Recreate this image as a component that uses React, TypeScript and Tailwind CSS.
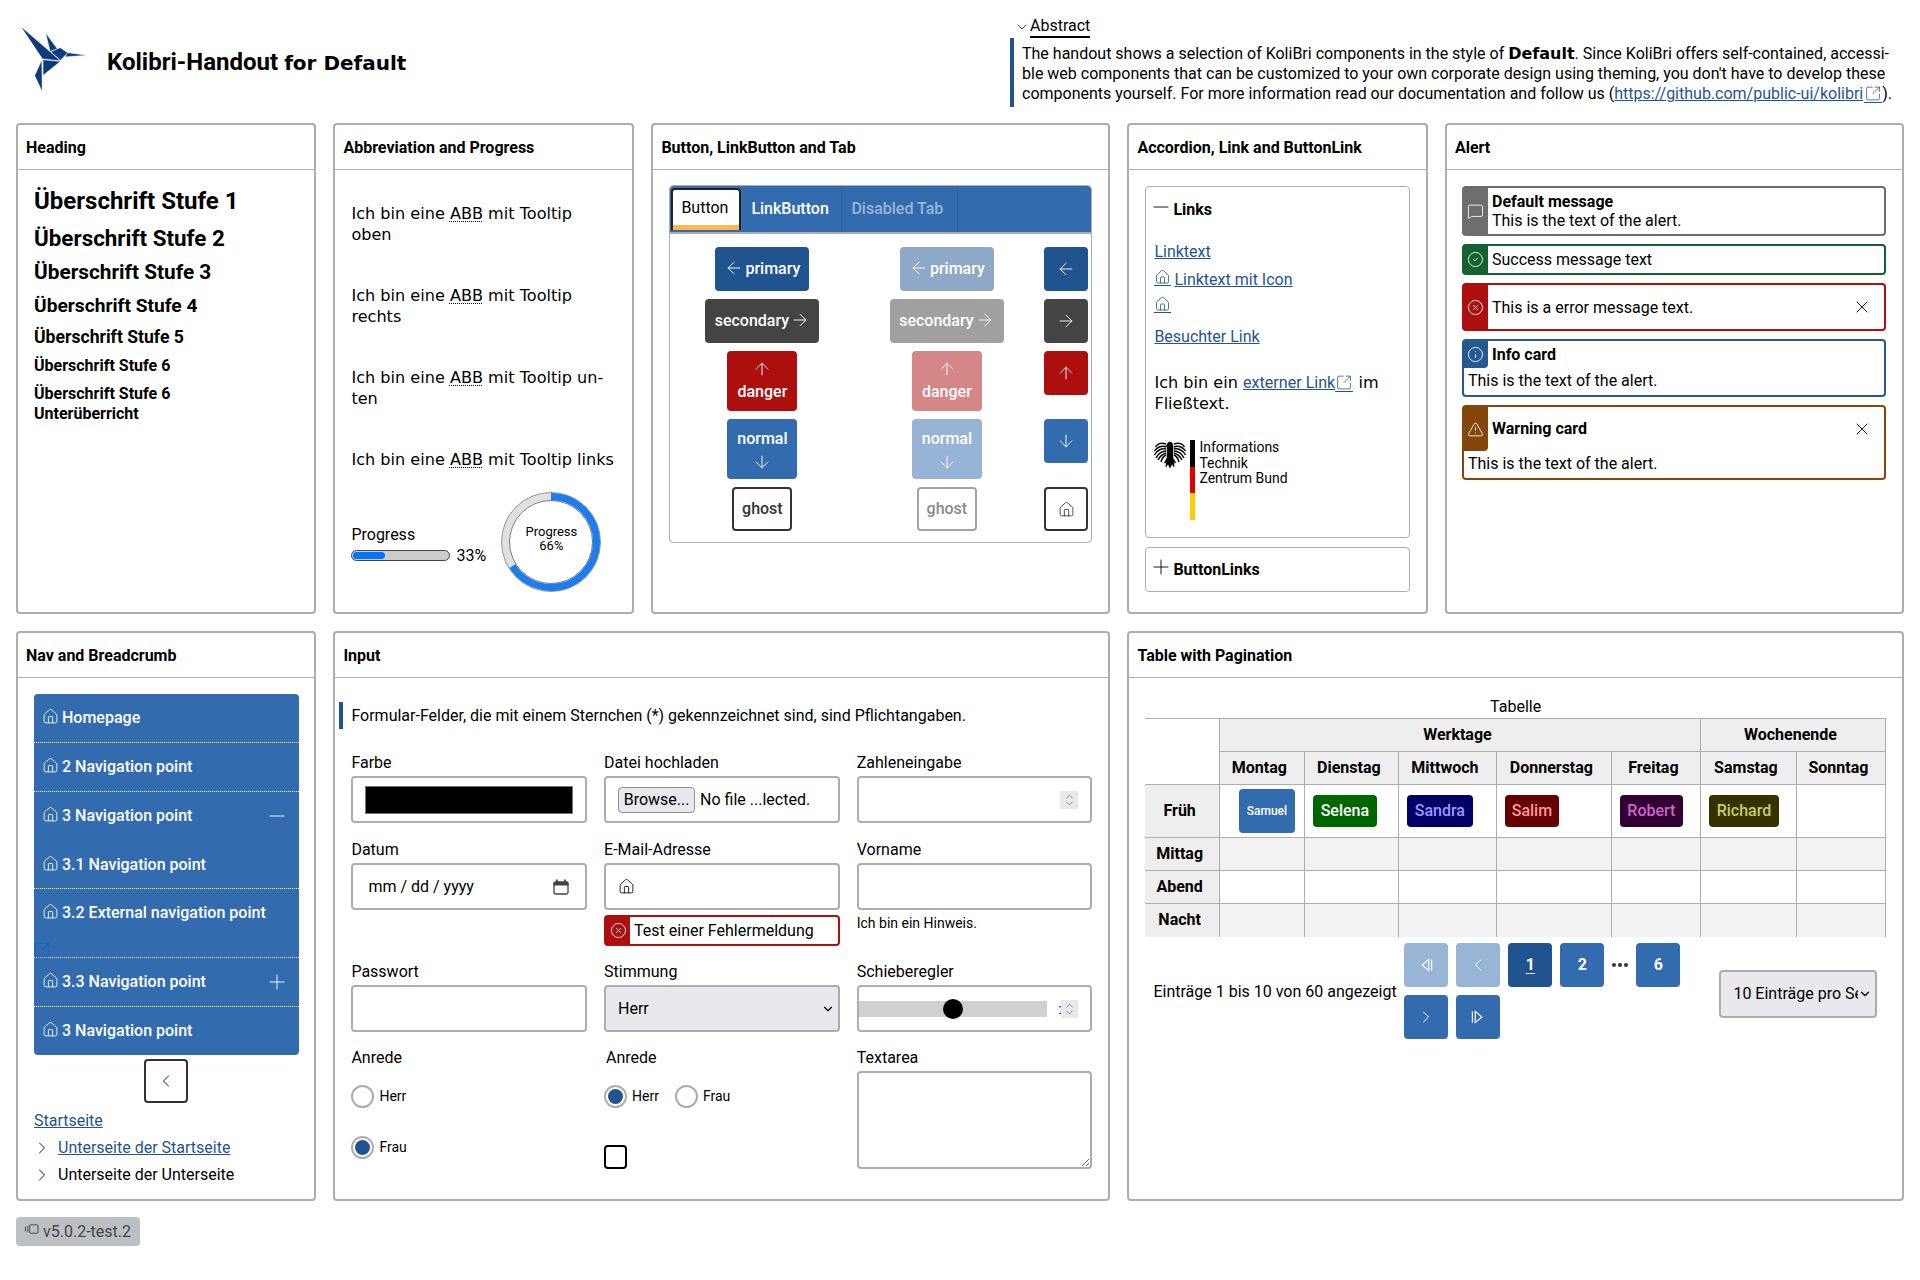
import React from 'react'
import {
  ArrowDown,
  ArrowLeft,
  ArrowRight,
  ArrowUp,
  ChevronDown,
  ChevronLeft,
  ChevronRight,
  ChevronUp,
  CircleCheck,
  CircleX,
  House,
  Info,
  MessageSquare,
  Minus,
  Plus,
  SquareArrowOutUpRight,
  TriangleAlert,
  X,
} from 'lucide-react'

const Card: React.FC<{ title: string; className?: string; children: React.ReactNode }> = ({
  title,
  className = '',
  children,
}) => (
  <section className={`border-2 border-[#adadad] rounded-[4px] bg-white min-w-0 ${className}`}>
    <h2 className="h-[45px] border-b border-[#adadad] px-[8px] pt-px flex items-center font-bold text-[16px] text-black">
      {title}
    </h2>
    {children}
  </section>
)

const ExtIcon: React.FC<{ className?: string; strokeWidth?: number }> = ({ className = '', strokeWidth = 1.1 }) => (
  <SquareArrowOutUpRight strokeWidth={strokeWidth} className={`inline-block ${className}`} />
)

const A: React.FC<{ children: React.ReactNode; className?: string }> = ({ children, className = '' }) => (
  <a className={`text-[#1f5491] underline ${className}`}>{children}</a>
)

const Abbr = () => (
  <span className="underline decoration-dotted decoration-1 underline-offset-2">ABB</span>
)

const Logo = () => (
  <svg viewBox="30 50 200 200" className="w-[67px] h-[67px] shrink-0 ml-[4px] mt-[26px]">
    <g fill="#0b3d7c" stroke="#fff" strokeWidth="1">
      <polygon points="33,52 120,127 150,154 97,148" />
      <polygon points="107,72 141,118 120,125" />
      <polygon points="122,127 150,115 172,130 151,152" />
      <polygon points="172,130 228,137 165,142" />
      <polygon points="99,151 150,156 99,197" />
      <polygon points="95,152 74,198 96,245" />
    </g>
  </svg>
)

const Eagle = () => (
  <svg viewBox="0 0 32 30" className="w-[32px] h-[30px] shrink-0" fill="none" stroke="#000">
    <path d="M16 2c-2 0-3 1.500-3 3l-1.500 1 1.500.5V18l-3 5 2-1v5l2-3 2 4 2-4 2 3v-5l2 1-3-5V6.500C19 4 18 2 16 2Z" fill="#000" strokeWidth="0.5" />
    <path d="M12 4C7 2 3 4 1.500 7M12 7C8 5 3 7 .5 11M12 9C8 8 3 10 .5 15M12 11C9 11 4 13 2 18M12 13C9 14 6 16 4 20M12 15C10 16 8 18 7 22" strokeWidth="1.400" />
    <path d="M20 4C25 2 29 4 30.500 7M20 7C24 5 29 7 31.500 11M20 9C24 8 29 10 31.500 15M20 11C23 11 28 13 30 18M20 13C23 14 26 16 28 20M20 15C22 16 24 18 25 22" strokeWidth="1.400" />
  </svg>
)

const Btn: React.FC<{ className: string; children: React.ReactNode }> = ({ className, children }) => (
  <div className={`rounded-[4px] flex items-center justify-center text-[16px] font-medium text-white ${className}`}>
    {children}
  </div>
)

const ButtonRows = ({ faded }: { faded: boolean }) => {
  const op = faded ? 'opacity-50' : ''
  return (
    <div className="flex flex-col items-center gap-2">
      <Btn className={`w-[94px] h-[44px] gap-[1px] bg-[#1f5491] ${op}`}>
        <ArrowLeft size={20} strokeWidth={1.1} className="-mt-[3px]" />
        primary
      </Btn>
      <Btn className={`w-[114px] h-[44px] gap-[1px] bg-[#444444] ${op}`}>
        secondary
        <ArrowRight size={20} strokeWidth={1.1} className="-mt-[3px]" />
      </Btn>
      <Btn className={`w-[70px] h-[60px] flex-col gap-[1px] bg-[#ad0f0f] ${op}`}>
        <ArrowUp size={20} strokeWidth={1.1} />
        danger
      </Btn>
      <Btn className={`w-[70px] h-[60px] flex-col gap-[1px] bg-[#326cae] ${op}`}>
        normal
        <ArrowDown size={20} strokeWidth={1.1} />
      </Btn>
      <Btn className={`w-[60px] h-[44px] border-2 ${faded ? 'border-[#a3a3a3]' : 'border-[#333333]'}`}>
        <span className={faded ? 'text-[#8a8a8a]' : 'text-[#333333]'}>ghost</span>
      </Btn>
    </div>
  )
}

const IconButtons = () => (
  <div className="flex flex-col items-center">
    <Btn className="w-[44px] h-[44px] bg-[#1f5491]">
      <ArrowLeft size={20} strokeWidth={1.1} />
    </Btn>
    <Btn className="w-[44px] h-[44px] mt-2 bg-[#444444]">
      <ArrowRight size={20} strokeWidth={1.1} />
    </Btn>
    <Btn className="w-[44px] h-[44px] mt-2 bg-[#ad0f0f]">
      <ArrowUp size={20} strokeWidth={1.1} />
    </Btn>
    <Btn className="w-[44px] h-[44px] mt-[24px] bg-[#326cae]">
      <ArrowDown size={20} strokeWidth={1.1} />
    </Btn>
    <Btn className="w-[44px] h-[44px] mt-[24px] border-2 border-[#333333]">
      <House size={17} strokeWidth={1.2} className="text-[#333333]" />
    </Btn>
  </div>
)

const alertColors = {
  gray: 'border-[#6e6e6e]',
  green: 'border-[#14622f]',
  red: 'border-[#ad0f0f]',
  blue: 'border-[#25598f]',
  brown: 'border-[#84460a]',
}
const alertBg = {
  gray: 'bg-[#6e6e6e]',
  green: 'bg-[#14622f]',
  red: 'bg-[#ad0f0f]',
  blue: 'bg-[#25598f]',
  brown: 'bg-[#84460a]',
}

const CloseX = () => (
  <div className="w-[48px] flex items-center pl-[16px]">
    <X size={20} strokeWidth={1.1} />
  </div>
)

const Alert: React.FC<{
  color: keyof typeof alertColors
  icon: React.ReactNode
  height: string
  close?: boolean
  children: React.ReactNode
}> = ({ color, icon, height, close, children }) => (
  <div className={`border-2 rounded-[4px] flex items-stretch ${alertColors[color]} ${height}`}>
    <div className={`w-[24px] shrink-0 flex items-center justify-center text-white ${alertBg[color]}`}>{icon}</div>
    <div className="flex-1 pl-[4px] flex flex-col justify-center leading-[19px] text-[16px] text-black">{children}</div>
    {close && <CloseX />}
  </div>
)

const AlertCard: React.FC<{
  color: keyof typeof alertColors
  icon: React.ReactNode
  height: string
  iconHeight: string
  title: string
  close?: boolean
  bodyClass: string
}> = ({ color, icon, height, iconHeight, title, close, bodyClass }) => (
  <div className={`border-2 rounded-[4px] ${alertColors[color]} ${height}`}>
    <div className={`flex items-center ${iconHeight}`}>
      <div
        className={`w-[24px] h-full shrink-0 rounded-br-[4px] flex items-center justify-center text-white ${alertBg[color]}`}
      >
        {icon}
      </div>
      <div className="flex-1 pl-[4px] font-bold text-[16px]">{title}</div>
      {close && <CloseX />}
    </div>
    <div className={`pl-[4px] text-[16px] leading-[19px] ${bodyClass}`}>This is the text of the alert.</div>
  </div>
)

const NavRow: React.FC<{
  label: string
  line?: boolean
  height?: string
  suffix?: React.ReactNode
  children?: React.ReactNode
}> = ({ label, line = true, height = 'h-[49px]', suffix, children }) => (
  <div className={`${height} ${line ? 'border-b border-dotted border-white' : ''} last:border-b-0`}>
    <div className="h-[48px] pl-[8px] pr-[10px] flex items-center text-white font-medium text-[16px]">
      <House size={17} strokeWidth={1.2} className="mr-[3px] -mt-[3px]" />
      <span className="flex-1">{label}</span>
      {suffix}
    </div>
    {children}
  </div>
)

const inputBox = 'h-[47px] border-2 border-[#adadad] rounded-[4px] bg-white'

const Label: React.FC<{ children: React.ReactNode; className?: string }> = ({ children, className = '' }) => (
  <div className={`h-[23px] leading-[20px] text-[16px] ${className}`}>{children}</div>
)

const Spin: React.FC<{ className?: string }> = ({ className = '' }) => (
  <div className={`w-[18px] h-[18px] bg-[#e9e9ed] flex flex-col items-center justify-center text-[#666] ${className}`}>
    <ChevronUp size={11} strokeWidth={1.5} className="-mb-[2px]" />
    <ChevronDown size={11} strokeWidth={1.5} className="-mt-[2px]" />
  </div>
)

const Radio: React.FC<{ checked?: boolean; label: string; className?: string }> = ({
  checked,
  label,
  className = '',
}) => (
  <div className={`flex items-center gap-[5px] text-[14px] ${className}`}>
    <div className="w-[23px] h-[23px] rounded-full border-2 border-[#adadad] flex items-center justify-center">
      {checked && <div className="w-[15px] h-[15px] rounded-full bg-[#1f5491]" />}
    </div>
    {label}
  </div>
)

const badges = [
  { n: 'Selena', c: 'w-[64px] bg-[#006600] text-white' },
  { n: 'Sandra', c: 'w-[66px] bg-[#000066] text-[#9999ff]' },
  { n: 'Salim', c: 'w-[54px] bg-[#660000] text-[#ff9999]' },
  { n: 'Robert', c: 'w-[63px] bg-[#330033] text-[#cc66cc]' },
  { n: 'Richard', c: 'w-[70px] bg-[#333300] text-[#cccc66]' },
]

const th = 'border border-[#adadad] bg-[#eeeeee] font-bold text-[16px] p-0 pr-[5px]'
const td = 'border border-[#adadad] p-0'

const PageBtn: React.FC<{ className?: string; children: React.ReactNode }> = ({ className = 'bg-[#326cae]', children }) => (
  <div className={`w-[44px] h-[44px] rounded-[4px] flex items-center justify-center text-white font-bold text-[16px] ${className}`}>
    {children}
  </div>
)

const App: React.FC = () => {
  return (
    <div className="w-[1920px] h-[1280px] bg-white pl-4 text-black font-['Roboto',sans-serif] text-[16px]">
      <header className="h-[123px] flex items-start">
        <Logo />
        <h1 className="ml-[20px] mt-[46px] text-[24px] leading-[32px] font-bold">
          Kolibri-Handout <span className="font-['DejaVu_Sans',sans-serif] text-[20px]">for Default</span>
        </h1>
        <div className="ml-auto mr-[34px] w-[876px] pt-[15px]">
          <div className="flex items-center h-[23px] pl-[4px]">
            <ChevronDown size={16} strokeWidth={1.1} />
            <span className="border-b-2 border-black leading-[21px] h-[23px]">Abstract</span>
          </div>
          <div className="border-l-4 border-[#1f5491] pl-[8px] pt-[6px] h-[69px] leading-[20px] whitespace-nowrap">
            The handout shows a selection of KoliBri components in the style of{' '}
            <strong className="font-['DejaVu_Sans',sans-serif] font-bold">Default</strong>. Since KoliBri offers
            self-contained, accessi-
            <br />
            ble web components that can be customized to your own corporate design using theming, you don't have to
            develop these
            <br />
            components yourself. For more information read our documentation and follow us (
            <A>
              https://github.com/public-ui/kolibri
              <ExtIcon className="w-[18px] h-[18px] align-[-4px] ml-px border-b border-[#1f5491]" />
            </A>
            ).
          </div>
        </div>
      </header>

      <main className="grid grid-cols-[300.4px_301px_459px_300.6px_459px] grid-rows-[491px_570px] gap-[17px]">
        <Card title="Heading">
          <div className="pl-[16px] pt-[14px] font-bold">
            <div className="text-[24px] leading-[35px]">Überschrift Stufe 1</div>
            <div className="text-[22.4px] leading-[36px] mt-px">Überschrift Stufe 2</div>
            <div className="text-[20.8px] leading-[32px]">Überschrift Stufe 3</div>
            <div className="text-[19.2px] leading-[32px] mt-[2px]">Überschrift Stufe 4</div>
            <div className="text-[17.6px] leading-[30px]">Überschrift Stufe 5</div>
            <div className="text-[16px] leading-[28px]">Überschrift Stufe 6</div>
            <div className="text-[16px] leading-[20px] mt-[4px]">Überschrift Stufe 6</div>
            <div className="text-[16px] leading-[19px]">Unterüberricht</div>
          </div>
        </Card>

        <Card title="Abbreviation and Progress">
          <div className="pl-[16px] pt-[33px]">
            <div className="font-['DejaVu_Sans',sans-serif] text-[16.1px] leading-[21px] flex flex-col gap-[40px]">
              <p>
                Ich bin eine <Abbr /> mit Tooltip
                <br />
                oben
              </p>
              <p>
                Ich bin eine <Abbr /> mit Tooltip
                <br />
                rechts
              </p>
              <p>
                Ich bin eine <Abbr /> mit Tooltip un-
                <br />
                ten
              </p>
              <p>
                Ich bin eine <Abbr /> mit Tooltip links
              </p>
            </div>
            <div className="mt-[22px] flex items-center">
              <div className="w-[150px] pt-[8px]">
                <div className="leading-[20px]">Progress</div>
                <div className="flex items-center -mt-px">
                  <div className="w-[99px] h-[11px] border border-[#444] rounded-full bg-[#cccccc] p-px">
                    <div className="w-[33%] h-full rounded-full bg-[#0075ff]" />
                  </div>
                  <span className="ml-[6px] text-[16px]">33%</span>
                </div>
              </div>
              <div className="relative w-[100px] h-[100px]">
                <svg viewBox="0 0 100 100" className="w-[100px] h-[100px]">
                  <circle cx="50" cy="50" r="45.500" fill="none" stroke="#e0e0e0" strokeWidth="7" />
                  <circle
                    cx="50"
                    cy="50"
                    r="45.500"
                    fill="none"
                    stroke="#1a7ef0"
                    strokeWidth="7"
                    strokeDasharray="188.700 285.900"
                    transform="rotate(-90 50 50)"
                  />
                  <circle cx="50" cy="50" r="49.500" fill="none" stroke="#777" strokeWidth="0.800" />
                  <circle cx="50" cy="50" r="41.500" fill="none" stroke="#555" strokeWidth="0.800" />
                </svg>
                <div className="absolute inset-0 flex flex-col items-center justify-center text-[13px] leading-[14px] pb-[6px]">
                  <span>Progress</span>
                  <span>66%</span>
                </div>
              </div>
            </div>
          </div>
        </Card>

        <Card title="Button, LinkButton and Tab">
          <div className="px-[16px] pt-[15px]">
            <div className="border border-[#adadad] rounded-[4px]">
              <div className="h-[48px] bg-[#326cae] rounded-t-[4px] border-b-2 border-[#adadad] flex items-stretch text-[16px] font-medium">
                <div className="ml-px my-[2px] w-[70px] bg-white border-2 border-b-0 border-[#222] rounded-t-[4px] flex flex-col">
                  <div className="flex-1 flex items-center pl-[8px] font-normal text-black">Button</div>
                  <div className="h-[5px] bg-[#ffb84d]" />
                </div>
                <div className="w-[101px] border-r border-[#2f6199] flex items-center pl-[10px] text-white">LinkButton</div>
                <div className="w-[116px] border-r border-[#2f6199] flex items-center pl-[9px] text-white/50">Disabled Tab</div>
              </div>
              <div className="grid grid-cols-[184px_185px_54px] pt-[13px] pb-[11px]">
                <ButtonRows faded={false} />
                <ButtonRows faded />
                <IconButtons />
              </div>
            </div>
          </div>
        </Card>

        <Card title="Accordion, Link and ButtonLink">
          <div className="px-[16px] pt-[16px]">
            <div className="h-[352px] border border-[#adadad] rounded-[4px] px-[8px]">
              <div className="h-[45px] flex items-center font-bold">
                <Minus size={24} strokeWidth={0.9} className="-ml-[5px] -mt-[6px]" />
                Links
              </div>
              <div className="mt-[8px] leading-[24px]">
                <div>
                  <A>Linktext</A>
                </div>
                <div className="mt-[4px]">
                  <A>
                    <House size={17} strokeWidth={1.2} className="inline-block mr-[3px] align-[-1px] border-b border-[#1f5491]" />
                    Linktext mit Icon
                  </A>
                </div>
                <div className="mt-[3px]">
                  <A>
                    <House size={17} strokeWidth={1.2} className="inline-block align-[-1px] border-b border-[#1f5491]" />
                  </A>
                </div>
                <div className="mt-[6px]">
                  <A>Besuchter Link</A>
                </div>
              </div>
              <p className="mt-[23px] font-['DejaVu_Sans',sans-serif] text-[16.1px] leading-[21px]">
                Ich bin ein{' '}
                <A className="font-['Roboto',sans-serif]">
                  externer Link
                  <ExtIcon className="w-[18px] h-[18px] align-[-4px] border-b border-[#1f5491]" />
                </A>{' '}
                im
                <br />
                Fließtext.
              </p>
              <div className="mt-[26px] flex items-start">
                <Eagle />
                <div className="ml-[4px] w-[5px] h-[80px] flex flex-col">
                  <div className="h-[27px] bg-black" />
                  <div className="h-[26px] bg-[#dd0000]" />
                  <div className="h-[27px] bg-[#ffcc00]" />
                </div>
                <div className="ml-[4px] text-[14px] leading-[15.500px]">
                  Informations
                  <br />
                  Technik
                  <br />
                  Zentrum Bund
                </div>
              </div>
            </div>
            <div className="mt-[9px] h-[45px] border border-[#adadad] rounded-[4px] px-[8px] flex items-center font-bold">
              <Plus size={24} strokeWidth={0.9} className="-ml-[5px] -mt-[6px]" />
              ButtonLinks
            </div>
          </div>
        </Card>

        <Card title="Alert">
          <div className="pl-[15px] pr-[16px] pt-[16px] flex flex-col gap-[8px]">
            <Alert color="gray" height="h-[50px]" icon={<MessageSquare size={17} strokeWidth={1.2} />}>
              <strong>Default message</strong>
              <span>This is the text of the alert.</span>
            </Alert>
            <Alert color="green" height="h-[31px]" icon={<CircleCheck size={17} strokeWidth={1.2} />}>
              Success message text
            </Alert>
            <Alert color="red" height="h-[48px]" close icon={<CircleX size={17} strokeWidth={1.2} />}>
              This is a error message text.
            </Alert>
            <AlertCard
              color="blue"
              height="h-[58px]"
              iconHeight="h-[27px]"
              icon={<Info size={17} strokeWidth={1.2} />}
              title="Info card"
              bodyClass="mt-[3px]"
            />
            <AlertCard
              color="brown"
              height="h-[75px]"
              iconHeight="h-[44px]"
              close
              icon={<TriangleAlert size={17} strokeWidth={1.2} />}
              title="Warning card"
              bodyClass="mt-[3px]"
            />
          </div>
        </Card>

        <Card title="Nav and Breadcrumb">
          <div className="px-[16px] pt-[16px]">
            <nav className="w-[265px] bg-[#326cae] rounded-[4px] overflow-hidden">
              <NavRow label="Homepage" />
              <NavRow label="2 Navigation point" />
              <NavRow label="3 Navigation point" line={false} suffix={<Minus size={24} strokeWidth={0.9} />} />
              <NavRow label="3.1 Navigation point" height="h-[48px]" />
              <NavRow label="3.2 External navigation point" height="h-[69px]">
                <ExtIcon strokeWidth={1.6} className="block w-[18px] h-[18px] ml-[-1px] text-[#1a5ecf]" />
              </NavRow>
              <NavRow label="3.3 Navigation point" suffix={<Plus size={24} strokeWidth={0.9} />} />
              <NavRow label="3 Navigation point" line={false} height="h-[48px]" />
            </nav>
            <div className="mt-[4px] mx-auto w-[44px] h-[44px] border-2 border-[#333] rounded-[4px] flex items-center justify-center">
              <ChevronLeft size={20} strokeWidth={1.1} />
            </div>
            <div className="mt-[4px]">
              <div className="h-[27px] flex items-center">
                <A>Startseite</A>
              </div>
              <div className="h-[27px] flex items-center">
                <ChevronRight size={20} strokeWidth={1.1} className="-ml-[2px] mr-[6px]" />
                <A>Unterseite der Startseite</A>
              </div>
              <div className="h-[27px] flex items-center">
                <ChevronRight size={20} strokeWidth={1.1} className="-ml-[2px] mr-[6px]" />
                Unterseite der Unterseite
              </div>
            </div>
          </div>
        </Card>

        <Card title="Input" className="col-span-2">
          <div className="pt-[24px]">
            <div className="ml-[4px] h-[27px] border-l-4 border-[#1f5491] pl-[8px] flex items-center">
              Formular-Felder, die mit einem Sternchen (*) gekennzeichnet sind, sind Pflichtangaben.
            </div>
            <div className="mt-[24px] px-[16px] grid grid-cols-3 gap-x-[17px] gap-y-[16px]">
              <div className="mb-px">
                <Label>Farbe</Label>
                <div className={`${inputBox} flex items-center px-[12px]`}>
                  <div className="w-full h-[28px] bg-black border border-[#777]" />
                </div>
              </div>
              <div>
                <Label>Datei hochladen</Label>
                <div className={`${inputBox} flex items-center pl-[12px] whitespace-nowrap`}>
                  <div className="w-[77px] h-[26px] bg-[#e9e9ed] border border-[#8f8f9d] rounded-[4px] flex items-center justify-center">
                    Browse...
                  </div>
                  <span className="ml-[5px]">No file ...lected.</span>
                </div>
              </div>
              <div>
                <Label>Zahleneingabe</Label>
                <div className={`${inputBox} flex items-center justify-end pr-[12px]`}>
                  <Spin />
                </div>
              </div>

              <div>
                <Label>Datum</Label>
                <div className={`${inputBox} flex items-center justify-between pl-[15px] pr-[16px]`}>
                  <span>mm / dd / yyyy</span>
                  <svg viewBox="0 0 16 16" className="w-[16px] h-[16px] text-[#444]" fill="none" stroke="currentColor">
                    <rect x="1" y="3" width="14" height="12" rx="1.500" strokeWidth="1.300" />
                    <path d="M1 3.500h14V6H1Z" fill="currentColor" />
                    <path d="M4 0.500v3M12 0.500v3" strokeWidth="1.800" />
                  </svg>
                </div>
              </div>
              <div>
                <Label>E-Mail-Adresse</Label>
                <div className={`${inputBox} flex items-center pl-[12px]`}>
                  <House size={17} strokeWidth={1.2} />
                </div>
                <div className="mt-[5px] h-[31px] border-2 border-[#ad0f0f] rounded-[4px] flex items-center">
                  <div className="w-[24px] h-full bg-[#ad0f0f] flex items-center justify-center text-white">
                    <CircleX size={17} strokeWidth={1.2} />
                  </div>
                  <span className="ml-[4px]">Test einer Fehlermeldung</span>
                </div>
              </div>
              <div>
                <Label>Vorname</Label>
                <input type="text" aria-label="Vorname" className={`${inputBox} w-full`} />
                <div className="mt-[4px] text-[14px] leading-[18px]">Ich bin ein Hinweis.</div>
              </div>

              <div>
                <Label>Passwort</Label>
                <input type="password" aria-label="Passwort" className={`${inputBox} w-full`} />
              </div>
              <div>
                <Label>Stimmung</Label>
                <div className={`${inputBox} !bg-[#e9e9ed] flex items-center justify-between pl-[12px] pr-[3px]`}>
                  <span>Herr</span>
                  <ChevronDown size={14} strokeWidth={2} />
                </div>
              </div>
              <div>
                <Label>Schieberegler</Label>
                <div className={`${inputBox} flex items-center pr-[12px]`}>
                  <div className="w-[189px] h-[16px] bg-[#d0d0d0] flex items-center">
                    <div className="ml-[84px] w-[20px] h-[20px] rounded-full bg-black" />
                  </div>
                  <span className="ml-[12px] w-[2px] overflow-hidden leading-none text-[14px]">:</span>
                  <Spin />
                </div>
              </div>

              <div>
                <Label>Anrede</Label>
                <Radio label="Herr" className="mt-[14px]" />
                <Radio label="Frau" checked className="mt-[28px]" />
              </div>
              <div>
                <Label className="pl-[2px]">Anrede</Label>
                <div className="flex mt-[14px] gap-[16px]">
                  <Radio label="Herr" checked />
                  <Radio label="Frau" />
                </div>
                <div className="mt-[37px] w-[23px] h-[24px] border-2 border-black rounded-[4px]" />
              </div>
              <div>
                <Label>Textarea</Label>
                <textarea aria-label="Textarea" className="block w-full h-[98px] border-2 border-[#adadad] rounded-[4px]" />
              </div>
            </div>
          </div>
        </Card>

        <Card title="Table with Pagination" className="col-span-2">
          <div className="px-[16px] pt-[19px]">
            <table className="w-[740px] table-fixed border-collapse">
              <caption className="h-[21px] leading-[19px] text-center">Tabelle</caption>
              <colgroup>
                <col className="w-[74px]" />
                <col className="w-[85px]" />
                <col className="w-[94px]" />
                <col className="w-[98px]" />
                <col className="w-[115px]" />
                <col className="w-[89px]" />
                <col className="w-[96px]" />
                <col className="w-[89px]" />
              </colgroup>
              <thead>
                <tr className="h-[33px]">
                  <td rowSpan={2} className="border-t border-[#adadad] border-r p-0" />
                  <th colSpan={5} className={th}>
                    Werktage
                  </th>
                  <th colSpan={2} className={th}>
                    Wochenende
                  </th>
                </tr>
                <tr className="h-[33px]">
                  {['Montag', 'Dienstag', 'Mittwoch', 'Donnerstag', 'Freitag', 'Samstag', 'Sonntag'].map(d => (
                    <th key={d} className={th}>
                      {d}
                    </th>
                  ))}
                </tr>
              </thead>
              <tbody>
                <tr className="h-[53px]">
                  <th className="border-y border-r border-[#adadad] bg-[#eeeeee] font-bold p-0 pr-[5px]">Früh</th>
                  <td className={td}>
                    <div className="ml-[19px] w-[56px] h-[44px] rounded-[4px] bg-[#326cae] text-white text-[12px] font-medium flex items-center justify-center">
                      Samuel
                    </div>
                  </td>
                  {badges.map(b => (
                    <td key={b.n} className={td}>
                      <div
                        className={`ml-[8px] h-[32px] rounded-[4px] font-medium flex items-center justify-center ${b.c}`}
                      >
                        {b.n}
                      </div>
                    </td>
                  ))}
                  <td className={td} />
                </tr>
                {['Mittag', 'Abend', 'Nacht'].map((r, i) => (
                  <tr key={r} className={`h-[33px] ${i !== 1 ? 'bg-[#f2f2f2]' : ''}`}>
                    <th className={`${i === 2 ? '' : 'border-b'} border-r border-[#adadad] bg-[#eeeeee] font-bold p-0 pr-[5px]`}>{r}</th>
                    {[0, 1, 2, 3, 4, 5, 6].map(c => (
                      <td key={c} className={`border-x ${i === 2 ? '' : 'border-b'} border-[#adadad] p-0`} />
                    ))}
                  </tr>
                ))}
              </tbody>
            </table>
            <div className="mt-[6px] h-[96px] flex items-center">
              <div className="ml-[8px] mt-[3px] w-[251px] whitespace-nowrap">Einträge 1 bis 10 von 60 angezeigt</div>
              <div className="w-[280px] flex flex-wrap gap-[8px] h-[96px]">
                <PageBtn className="bg-[#98b5d6]">
                  <svg viewBox="0 0 16 16" className="w-[18px] h-[18px]" fill="none" stroke="currentColor" strokeWidth="1">
                    <path d="M10.500 3 4.500 8l6 5ZM13 3v10" />
                  </svg>
                </PageBtn>
                <PageBtn className="bg-[#98b5d6]">
                  <ChevronLeft size={20} strokeWidth={1.1} />
                </PageBtn>
                <PageBtn className="bg-[#1f5491]">
                  <span className="underline underline-offset-3">1</span>
                </PageBtn>
                <PageBtn>2</PageBtn>
                <div className="w-[16px] h-[44px] flex items-center justify-center gap-[2px]">
                  <span className="w-[4px] h-[4px] shrink-0 rounded-full bg-[#333]" />
                  <span className="w-[4px] h-[4px] shrink-0 rounded-full bg-[#333]" />
                  <span className="w-[4px] h-[4px] shrink-0 rounded-full bg-[#333]" />
                </div>
                <PageBtn>6</PageBtn>
                <PageBtn>
                  <ChevronRight size={20} strokeWidth={1.1} />
                </PageBtn>
                <PageBtn>
                  <svg viewBox="0 0 16 16" className="w-[18px] h-[18px]" fill="none" stroke="currentColor" strokeWidth="1">
                    <path d="M5.500 3l6 5-6 5ZM3 3v10" />
                  </svg>
                </PageBtn>
              </div>
              <div className="ml-[35px] mt-[6px] w-[158px] h-[48px] border-2 border-[#adadad] rounded-[4px] bg-[#e9e9ed] flex items-center pl-[12px] pr-[3px]">
                <span className="flex-1 overflow-hidden whitespace-nowrap">10 Einträge pro Seite</span>
                <ChevronDown size={14} strokeWidth={2} />
              </div>
            </div>
          </div>
        </Card>
      </main>

      <div className="mt-[16px] w-[124px] h-[29px] rounded-[4px] bg-[#bcc0c4] text-[#444] flex items-center pl-[8px] text-[16px]">
        <svg viewBox="0 0 16 14" className="w-[15px] h-[13px] mr-[4px] -mt-[4px]" fill="none" stroke="currentColor" strokeWidth="1">
          <rect x="6" y="2" width="9" height="9" rx="1" />
          <path d="M4 3v7M1.500 4v5" />
        </svg>
        v5.0.2-test.2
      </div>
    </div>
  )
}

export default App
